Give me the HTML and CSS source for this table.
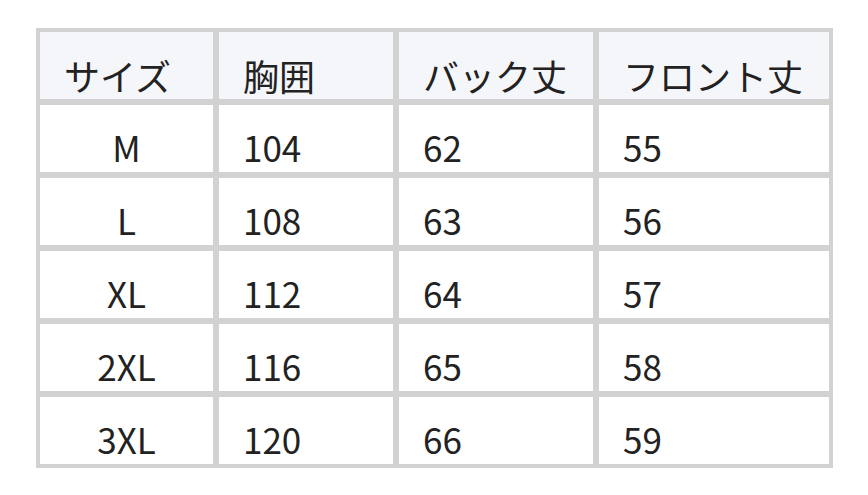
FILE: index.html
```html
<!DOCTYPE html>
<html lang="ja">
<head>
<meta charset="utf-8">
<title>サイズ表</title>
<link rel="stylesheet" href="styles.css">
</head>
<body>
<div class="wrap">
  <table class="size-table">
    <thead>
      <tr>
        <th class="c1">サイズ</th>
        <th class="c2">胸囲</th>
        <th class="c3">バック丈</th>
        <th class="c4">フロント丈</th>
      </tr>
    </thead>
    <tbody>
      <tr><td class="size">M</td><td>104</td><td>62</td><td>55</td></tr>
      <tr><td class="size">L</td><td>108</td><td>63</td><td>56</td></tr>
      <tr><td class="size">XL</td><td>112</td><td>64</td><td>57</td></tr>
      <tr><td class="size">2XL</td><td>116</td><td>65</td><td>58</td></tr>
      <tr><td class="size">3XL</td><td>120</td><td>66</td><td>59</td></tr>
    </tbody>
  </table>
</div>
</body>
</html>
```
FILE: styles.css
```css
html, body {
  margin: 0;
  padding: 0;
  background: #ffffff;
}

.wrap {
  padding: 28px 0 0 36px;
}

.size-table {
  box-sizing: border-box;
  width: 797px;
  table-layout: fixed;
  border-collapse: separate;
  border-spacing: 0;
  border: 1px solid #d2d2d2;
  font-family: "Noto Sans CJK JP", "Noto Sans", sans-serif;
  font-size: 35px;
  color: #222222;
}

.size-table th,
.size-table td {
  box-sizing: border-box;
  border: 3px solid #d2d2d2;
  padding: 18px 0 1px 24px;
  line-height: 48px;
  text-align: left;
  font-weight: 400;
  white-space: nowrap;
  vertical-align: top;
}

.size-table th {
  background: #f5f6fa;
  font-size: 36px;
  padding-top: 19px;
  padding-bottom: 0;
}

.size-table .c1 { width: 179px; }
.size-table .c2 { width: 180px; }
.size-table .c3 { width: 200px; }
.size-table .c4 { width: 236px; }

.size-table td.size {
  text-align: center;
  padding-left: 0;
}
```
